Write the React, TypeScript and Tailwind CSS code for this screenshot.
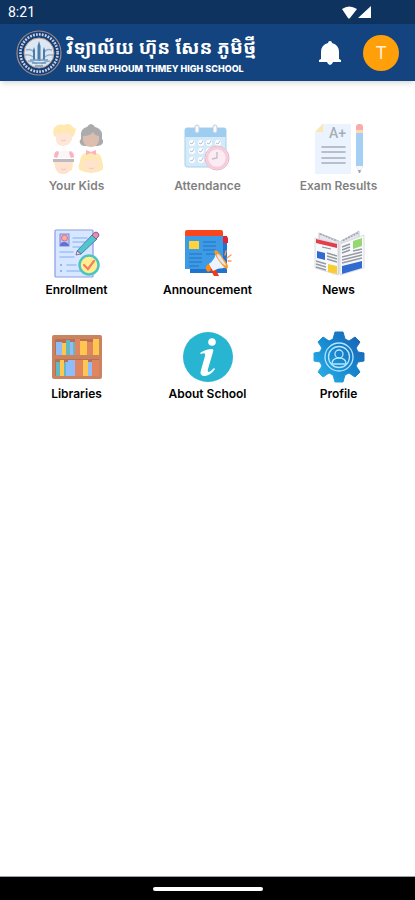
import type { ReactNode } from 'react'

function SchoolLogo() {
  return (
    <svg viewBox="0 0 46 46" className="size-[46px] shrink-0" aria-hidden="true">
      <circle cx="23" cy="23" r="22" fill="#173f77" stroke="#a08a86" strokeWidth="1.2" />
      <circle cx="23" cy="23" r="18.6" fill="none" stroke="#c3d0e2" strokeWidth="2.6" strokeDasharray="1.8 1.2" />
      <circle cx="23" cy="23" r="15" fill="#dce7f2" stroke="#b99a88" strokeWidth="1" />
      <path d="M10 20q6-2 8 3M36 20q-6-2-8 3M9 25q7-1 10 4M37 25q-7-1-10 4M12 31q5 0 9 3M34 31q-5 0-9 3" fill="none" stroke="#8facca" strokeWidth="1.4" />
      <path d="M23 11l1.5 5v15h-3V16zM18 17l1 3v10h-2V20zM28 17l1 3v10h-2V20z" fill="#4a7dac" />
      <path d="M14 30h18M16 33h14M19 36h8" stroke="#6f98be" strokeWidth="1.3" />
    </svg>
  )
}

function KidsIcon() {
  return (
    <g>
      <path d="M5 12q0-9 9-8 7 0 7 9v3q-2 7-9 7t-7-7z" fill="#ffc39a" />
      <path d="M3 13C0 4 7 0 13 2q5-2 7 0 1 2 5 4-1 4-3 8l-2-1-2-4q-7 3-12 0l-1 5z" fill="#ffc93c" />
      <path d="M29 20q-1-2 1-4V10q1-5 6-6 4-6 8 0 5 1 7 6v6q2 2 1 4-2 3-5 3H34q-4 0-5-3z" fill="#2f2f35" />
      <path d="M32 13q8 0 10-4 2 4 6 4v4q-1 7-8 7t-8-7z" fill="#a85f38" />
      <path d="M3 32V31q2-4 6-3h7q6 0 7 4v3H3z" fill="#f3e9f0" />
      <path d="M3 34q0-6 4-6l1 2-2 5zM19 28q4 1 4 6l-3 1-2-5z" fill="#ef4565" />
      <path d="M2 36h21v3H2z" fill="#5c5366" />
      <path d="M3 39h19l-1 8q-8 3-16 0z" fill="#ffc93c" />
      <path d="M5 39h15q1 12-8 12T5 39z" fill="#ffb98a" />
      <path d="M29 47q-3-3 0-8 0-10 11-10t11 10q3 5 0 8-5 3-11 3t-11-3z" fill="#ffc93c" />
      <path d="M32 38q8 0 12-4 2 4 5 4 0 11-9 11t-8-11z" fill="#ffbd80" />
      <path d="M35 27l5 2 5-2v5l-5-2-5 2z" fill="#ef4565" />
      <path d="M10 17q2 2 5 0M38 19q2 2 5 0M10 46q2 1 5 0M38 45q2 1 5 0" fill="none" stroke="#cf604c" strokeWidth=".8" />
    </g>
  )
}

function AttendanceIcon() {
  return (
    <g>
      <rect x="3" y="5" width="41" height="39" rx="2" fill="#91cdf4" stroke="#3289c5" strokeWidth="1" />
      <path d="M3 14V7q0-2 2-2h37q2 0 2 2v7z" fill="#1183d8" />
      <rect x="13" y="2" width="4" height="8" rx="2" fill="#edf4ff" stroke="#6886a5" />
      <rect x="31" y="2" width="4" height="8" rx="2" fill="#edf4ff" stroke="#6886a5" />
      <g fill="#fff">
        <circle cx="10" cy="20" r="3" />
        <circle cx="19" cy="20" r="3" />
        <circle cx="27" cy="20" r="3" />
        <circle cx="36" cy="20" r="3" />
        <circle cx="10" cy="28" r="3" />
        <circle cx="19" cy="28" r="3" />
        <circle cx="27" cy="28" r="3" />
        <circle cx="10" cy="37" r="3" />
        <circle cx="19" cy="37" r="3" />
      </g>
      <path d="M8 20l2 1 2-3M17 20l2 1 2-3M25 20l2 1 2-3M34 20l2 1 2-3M8 28l2 1 2-3M17 28l2 1 2-3M8 37l2 1 2-3M17 37l2 1 2-3" fill="none" stroke="#46627f" strokeWidth="1" />
      <circle cx="35" cy="35" r="12" fill="#f6d2e3" stroke="#b94c74" strokeWidth="1" />
      <circle cx="35" cy="35" r="10" fill="none" stroke="#ed82a5" strokeWidth="2.5" />
      <path d="M35 29v6l-5 1" fill="none" stroke="#79546f" strokeWidth="1.4" />
    </g>
  )
}

function ExamIcon() {
  return (
    <g>
      <path d="M9 1h29v50H2V9z" fill="#cee3ff" />
      <path d="M10 1v8H2z" fill="#ffbf3b" />
      <text x="16" y="15" fill="#253344" className="font-['Roboto'] text-[14px] font-medium">
        A+
      </text>
      <path d="M9 24h23M9 29h23M9 35h23M9 40h23" stroke="#26364c" strokeWidth="1.6" strokeLinecap="round" />
      <path d="M43 8h7v35l-3 7h-1l-3-7z" fill="#2488e8" />
      <path d="M43 8V4q0-3 3-3h1q3 0 3 3v4z" fill="#ef2f2f" />
      <path d="M43 7h7v3h-7z" fill="#f8a13a" />
      <path d="M43 43h7l-3 7h-1z" fill="#e8ecf4" />
      <path d="M45 47h3l-1 3h-1z" fill="#101d2c" />
    </g>
  )
}

function EnrollmentIcon() {
  return (
    <g>
      <rect x="4" y="3" width="38" height="47" rx="1" fill="#d6e7ff" stroke="#8a9be6" strokeWidth="1.2" />
      <path d="M22 11h14M22 15h12M22 20h7M9 25h13M9 30h14M16 38h9M16 44h14" stroke="#9dc0f7" strokeWidth="1.5" strokeLinecap="round" />
      <rect x="9" y="7" width="9" height="12" fill="#b8caff" stroke="#7d86e0" />
      <circle cx="13.5" cy="11" r="3" fill="#ffac9a" stroke="#dc6073" strokeWidth=".8" />
      <path d="M9 19q0-4 4-4t5 4z" fill="#5d72cf" />
      <path d="M9 37h2v2H9zM9 43h2v2H9z" fill="#8cb5f5" />
      <path d="M26 24L41 8l5 4-16 15z" fill="#4fc8cd" stroke="#5b78b4" strokeWidth="1" />
      <path d="M41 8l2-2q2-2 4 0t0 4l-2 2z" fill="#f58c91" stroke="#6b66b2" strokeWidth="1" />
      <path d="M25 28l1-4 4 3z" fill="#ffd6b7" stroke="#555da7" strokeWidth=".8" />
      <circle cx="38" cy="38" r="9.5" fill="#ffee8c" stroke="#4cc3c6" strokeWidth="2.5" />
      <path d="M33 38l4 4 6-8" fill="none" stroke="#f27d69" strokeWidth="2.2" strokeLinecap="round" />
    </g>
  )
}

function AnnouncementIcon() {
  return (
    <g>
      <path d="M8 9h37v37H8z" fill="#1f74cc" />
      <path d="M39 9h4q3 0 3 3v4h-7z" fill="#e32334" />
      <path d="M3 9h38v33H3z" fill="#3d9be6" />
      <path d="M3 9V5q0-2 2-2h34q2 0 2 2v4z" fill="#f9461f" />
      <path d="M7 14h10v8H7z" fill="#ffd43b" />
      <path d="M21 15h13M21 19h13M21 23h13M7 27h13M7 31h13M7 35h13M7 39h10M24 27h9" stroke="#2273bd" strokeWidth="1.2" />
      <path d="M29 36l-4 2q-3 4 1 7l6-3z" fill="#ff8b16" />
      <path d="M28 42l4 7h5l-4-8z" fill="#ed3a20" />
      <path d="M27 37q7-5 7-13l11 17q-7-1-14 3z" fill="#eef4ff" />
      <path d="M33 23q3 0 8 8 7 8 4 11-2 0-8-8-6-8-4-11z" fill="#ff971f" />
      <path d="M35 27q3 0 6 6 3 4 3 6-3-1-6-5-4-5-3-7z" fill="#dce8f8" />
      <path d="M43 28l1-4M45 31l4-3M46 34h3" stroke="#ff9a55" strokeWidth="1.3" strokeLinecap="round" />
    </g>
  )
}

function NewsIcon() {
  return (
    <g>
      <path d="M6 6l20 8v33L6 40zM46 4v35L28 47V14z" fill="#e5e7ed" stroke="#b7bcc7" strokeWidth=".8" />
      <path d="M2 11l23 6v31L2 41zM27 17l24-9v33l-24 7z" fill="#f8f9fc" stroke="#d3d6dd" strokeWidth=".8" />
      <path d="M7 7l17 7M45 6l-16 8" stroke="#a3a7b0" strokeWidth="1.5" strokeDasharray="2 1" />
      <path d="M3 12l21 5v4L3 16z" fill="#e43d4b" />
      <path d="M9 20l9 2" stroke="#8d929c" strokeWidth="1.2" />
      <path d="M4 24l8 2v7l-8-2z" fill="#306bd0" />
      <path d="M15 37l9 2v8l-9-2z" fill="#f8cd34" />
      <path d="M14 26l10 3M14 29l10 3M14 32l10 3M3 34l10 3M3 37l10 3M3 40l10 3M29 20l8-3M29 23l8-3M29 26l8-3M29 30l20-5M29 33l20-5M40 24l9-2M29 36l20-5" stroke="#9599a2" strokeWidth="1.4" />
      <path d="M40 14l9-3v8l-9 3z" fill="#97d76f" />
      <path d="M29 39l20-5v7l-20 6z" fill="#306bd0" />
    </g>
  )
}

function LibrariesIcon() {
  return (
    <g>
      <rect x="1" y="4" width="50" height="44" rx="2" fill="#c9835e" />
      <path d="M4 8h44v16H4zM4 28h44v17H4z" fill="#b86f55" />
      <path d="M5 11h6v13H5zM18 11h4v13h-4zM14 31h3v14h-3zM17 29h7v16h-7zM37 31h4v14h-4z" fill="#8fbcfb" />
      <path d="M11 12h4v12h-4zM29 10h7v14h-7zM42 8h6v16h-6zM9 29h4v16H9zM32 29h5v16h-5z" fill="#ffc74f" />
      <path d="M15 9h4v15h-4zM22 11h2v13h-2zM5 31h4v14H5zM13 32h2v13h-2z" fill="#62b9c0" />
      <path d="M24 8h5v16h-5zM36 11h6v13h-6zM24 29h8v16h-8zM41 29h7v16h-7z" fill="#e08560" />
      <path d="M1 24h50v4H1z" fill="#c9835e" />
    </g>
  )
}

function AboutIcon() {
  return (
    <g>
      <circle cx="26" cy="26" r="25" fill="#27b5d1" />
      <circle cx="30" cy="11" r="3.8" fill="#fff" />
      <path d="M18 22q6-4 12-4 2 0 1 3l-5 17q-1 3 1 3 2-1 5-4l1 1q-4 6-10 7-6 0-4-6l4-14q1-4-4-2z" fill="#fff" />
    </g>
  )
}

function ProfileIcon() {
  return (
    <g>
      <defs>
        <linearGradient id="gear" gradientUnits="userSpaceOnUse" x1="46" y1="10" x2="6" y2="42">
          <stop stopColor="#1a68b8" />
          <stop offset=".5" stopColor="#1688cf" />
          <stop offset="1" stopColor="#29aae4" />
        </linearGradient>
      </defs>
      <path
        d="M22 1h8l2 7 4 2 6-4 5 5-4 6 2 4 6 1v8l-6 1-2 4 4 6-5 5-6-4-4 2-2 7h-8l-2-7-4-2-6 4-5-5 4-6-2-4-6-1v-8l6-1 2-4-4-6 5-5 6 4 4-2z"
        fill="url(#gear)"
        stroke="url(#gear)"
        strokeLinejoin="round"
      />
      <g fill="none" stroke="#b5e5ff" strokeWidth="1.3">
        <circle cx="26" cy="26" r="14" />
        <circle cx="26" cy="26" r="10.5" />
        <circle cx="26" cy="23" r="4" />
        <path d="M19 33q0-6 7-6t7 6z" />
      </g>
    </g>
  )
}

type MenuItem = { label: string; icon: ReactNode; disabled?: boolean }

const items: MenuItem[] = [
  { label: 'Your Kids', icon: <KidsIcon />, disabled: true },
  { label: 'Attendance', icon: <AttendanceIcon />, disabled: true },
  { label: 'Exam Results', icon: <ExamIcon />, disabled: true },
  { label: 'Enrollment', icon: <EnrollmentIcon /> },
  { label: 'Announcement', icon: <AnnouncementIcon /> },
  { label: 'News', icon: <NewsIcon /> },
  { label: 'Libraries', icon: <LibrariesIcon /> },
  { label: 'About School', icon: <AboutIcon /> },
  { label: 'Profile', icon: <ProfileIcon /> },
]

export default function App() {
  return (
    <div className="flex min-h-screen flex-col bg-white font-['Roboto',sans-serif]">
      <div className="flex h-6 items-center justify-between bg-[#0e335f] pr-[42px] pl-2 text-sm text-white">
        <span>8:21</span>
        <svg viewBox="0 0 32 14" className="h-[14px] w-8" fill="#fff" aria-hidden="true">
          <path d="M1 4q7-5 15 0l-7 9q-1 1-2 0zM30 1v12H17z" />
        </svg>
      </div>

      <header className="flex h-[57px] items-center bg-[#134480] px-4 text-white shadow-md">
        <SchoolLogo />
        <div className="ml-1 flex min-w-0 flex-1 flex-col whitespace-nowrap">
          <h1 className="font-['Noto_Sans_Khmer','Noto_Sans','DejaVu_Sans',sans-serif] text-[19px] leading-8 font-bold">
            វិទ្យាល័យ ហ៊ុន សែន ភូមិថ្មី
          </h1>
          <p className="font-['Inter',sans-serif] text-[9px] leading-3 font-extrabold">HUN SEN PHOUM THMEY HIGH SCHOOL</p>
        </div>
        <button type="button" aria-label="Notifications" className="mr-[22px] shrink-0">
          <svg viewBox="0 0 22 24" className="h-6 w-[22px]" fill="#fff" aria-hidden="true">
            <path d="M11 0q2 0 2 2 7 2 7 9v7l2 1v2H0v-2l2-1v-7q0-7 7-9 0-2 2-2zM8 21h6q-1 3-3 3t-3-3z" />
          </svg>
        </button>
        <button type="button" aria-label="Account" className="size-9 shrink-0 rounded-full bg-[#ff9f0a] text-lg text-[#fff0d8]">
          T
        </button>
      </header>

      <main className="flex-1 px-[11px] pt-[42px]">
        <nav className="grid grid-cols-3 gap-y-[30px]">
          {items.map((item) => (
            <button key={item.label} type="button" disabled={item.disabled} className="group flex flex-col items-center text-black">
              <svg viewBox="0 0 52 52" className="size-[52px] group-disabled:opacity-40" aria-hidden="true">
                {item.icon}
              </svg>
              <span className="font-['Inter',sans-serif] text-xs leading-[22px] font-semibold whitespace-nowrap group-disabled:opacity-50">
                {item.label}
              </span>
            </button>
          ))}
        </nav>
      </main>

      <footer className="flex h-6 items-center justify-center border-t border-gray-400 bg-black">
        <div className="h-1 w-[110px] rounded-full bg-white" />
      </footer>
    </div>
  )
}
